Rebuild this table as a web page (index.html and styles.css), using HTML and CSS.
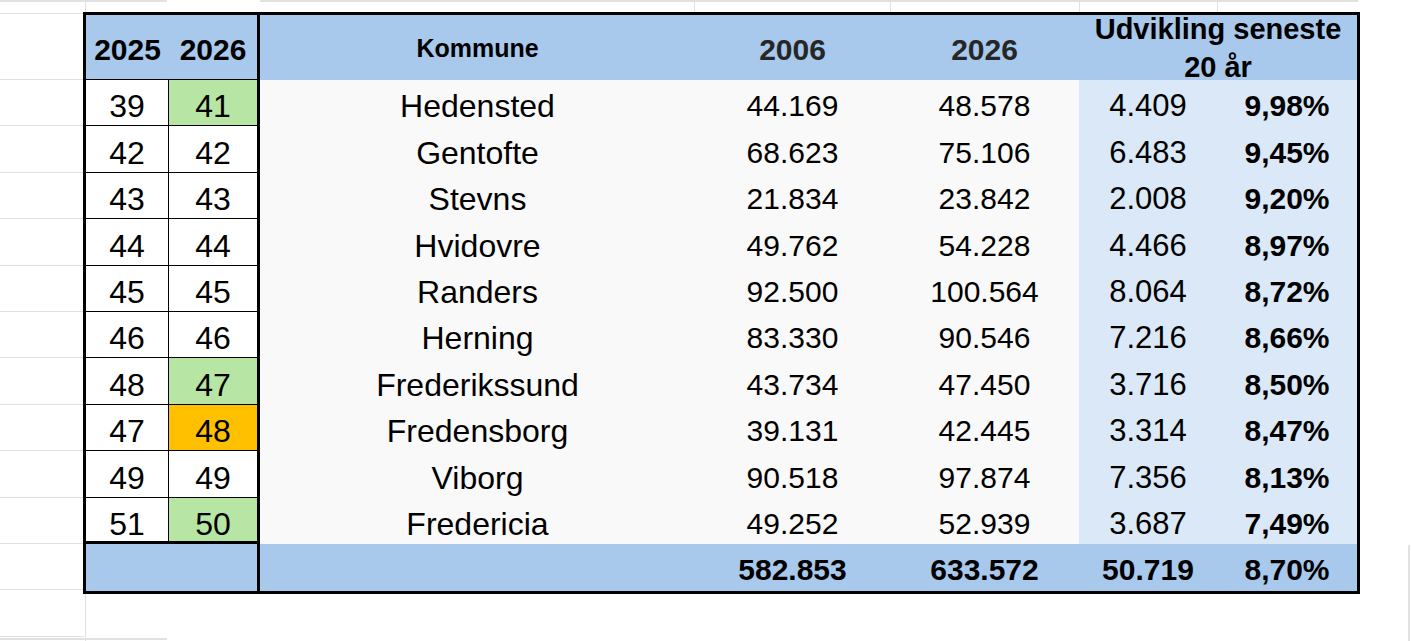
FILE: index.html
```html
<!DOCTYPE html>
<html lang="da">
<head>
<meta charset="utf-8">
<title>Kommuner</title>
<link rel="stylesheet" href="styles.css">
</head>
<body>
<div class="tbl">
  <div class="ranks">
    <div class="rh"><div class="c1">2025</div><div class="c2">2026</div></div>
    <div class="rr"><div class="c1">39</div><div class="c2 up">41</div></div>
    <div class="rr"><div class="c1">42</div><div class="c2">42</div></div>
    <div class="rr"><div class="c1">43</div><div class="c2">43</div></div>
    <div class="rr"><div class="c1">44</div><div class="c2">44</div></div>
    <div class="rr"><div class="c1">45</div><div class="c2">45</div></div>
    <div class="rr"><div class="c1">46</div><div class="c2">46</div></div>
    <div class="rr"><div class="c1">48</div><div class="c2 up">47</div></div>
    <div class="rr"><div class="c1">47</div><div class="c2 down">48</div></div>
    <div class="rr"><div class="c1">49</div><div class="c2">49</div></div>
    <div class="rr last"><div class="c1">51</div><div class="c2 up">50</div></div>
    <div class="rf"></div>
  </div>
  <div class="main">
    <div class="mh">
      <div class="hk">Kommune</div>
      <div class="hy">2006</div>
      <div class="hy">2026</div>
      <div class="udv">Udvikling seneste<br>20 år</div>
    </div>
    <div class="mr"><div class="name">Hedensted</div><div class="num">44.169</div><div class="num">48.578</div><div class="abs">4.409</div><div class="pct">9,98%</div></div>
    <div class="mr"><div class="name">Gentofte</div><div class="num">68.623</div><div class="num">75.106</div><div class="abs">6.483</div><div class="pct">9,45%</div></div>
    <div class="mr"><div class="name">Stevns</div><div class="num">21.834</div><div class="num">23.842</div><div class="abs">2.008</div><div class="pct">9,20%</div></div>
    <div class="mr"><div class="name">Hvidovre</div><div class="num">49.762</div><div class="num">54.228</div><div class="abs">4.466</div><div class="pct">8,97%</div></div>
    <div class="mr"><div class="name">Randers</div><div class="num">92.500</div><div class="num">100.564</div><div class="abs">8.064</div><div class="pct">8,72%</div></div>
    <div class="mr"><div class="name">Herning</div><div class="num">83.330</div><div class="num">90.546</div><div class="abs">7.216</div><div class="pct">8,66%</div></div>
    <div class="mr"><div class="name">Frederikssund</div><div class="num">43.734</div><div class="num">47.450</div><div class="abs">3.716</div><div class="pct">8,50%</div></div>
    <div class="mr"><div class="name">Fredensborg</div><div class="num">39.131</div><div class="num">42.445</div><div class="abs">3.314</div><div class="pct">8,47%</div></div>
    <div class="mr"><div class="name">Viborg</div><div class="num">90.518</div><div class="num">97.874</div><div class="abs">7.356</div><div class="pct">8,13%</div></div>
    <div class="mr"><div class="name">Fredericia</div><div class="num">49.252</div><div class="num">52.939</div><div class="abs">3.687</div><div class="pct">7,49%</div></div>
    <div class="mf"><div></div><div>582.853</div><div>633.572</div><div>50.719</div><div>8,70%</div></div>
  </div>
</div>
</body>
</html>
```
FILE: styles.css
```css
html, body {
  margin: 0;
  padding: 0;
}

body {
  width: 1411px;
  height: 641px;
  overflow: hidden;
  background-color: #ffffff;
  font-family: "Liberation Sans", Arial, sans-serif;
  color: #000;
  padding: 12px 0 0 83px;
  box-sizing: border-box;
  background-image:
    repeating-linear-gradient(180deg, #e1e1e1 0 1px, transparent 1px 46.4px),
    linear-gradient(#e1e1e1, #e1e1e1),
    linear-gradient(#e1e1e1, #e1e1e1),
    linear-gradient(#e1e1e1, #e1e1e1),
    linear-gradient(#e1e1e1, #e1e1e1),
    linear-gradient(#e1e1e1, #e1e1e1),
    linear-gradient(#e1e1e1, #e1e1e1),
    linear-gradient(#e1e1e1, #e1e1e1),
    linear-gradient(#e1e1e1, #e1e1e1),
    linear-gradient(#e1e1e1, #e1e1e1),
    linear-gradient(#e1e1e1, #e1e1e1),
    linear-gradient(#e1e1e1, #e1e1e1);
  background-repeat: no-repeat;
  background-position:
    0 79px,
    0 13px,
    0 0,
    260px 0,
    85px 0,
    694px 0,
    890px 0,
    1079px 0,
    1217px 0,
    85px 594px,
    0 638px,
    1408px 545px;
  background-size:
    84px 562px,
    84px 1px,
    167px 2px,
    1098px 2px,
    1px 13px,
    1px 13px,
    1px 13px,
    1px 13px,
    1px 13px,
    1px 47px,
    167px 2px,
    2px 96px;
}

.tbl {
  display: flex;
  width: 1277px;
  height: 582px;
  border: 3px solid #000;
  box-sizing: border-box;
}

/* ---------- left rank columns ---------- */
.ranks {
  width: 174px;
  border-right: 3px solid #000;
  box-sizing: border-box;
  display: flex;
  flex-direction: column;
  flex: none;
}

.rh,
.rr {
  display: flex;
  box-sizing: border-box;
}

.rh {
  height: 65px;
  background: #a8c8ec;
  border-bottom: 1px solid #000;
  font-weight: bold;
  font-size: 30px;
}

.rr {
  height: 46.4px;
  border-bottom: 1px solid #000;
  font-size: 32px;
  background: #fff;
}

.rr.last {
  border-bottom: 3px solid #000;
}

.c1,
.c2 {
  display: flex;
  align-items: flex-end;
  justify-content: center;
  line-height: 1;
  box-sizing: border-box;
}

.c1 {
  width: 83px;
}

.c2 {
  width: 88px;
}

.rr .c1 {
  border-right: 1px solid #000;
}

.rh .c1,
.rh .c2 {
  padding-bottom: 14px;
}

.rr .c1,
.rr .c2 {
  padding-bottom: 3px;
}

.rr.last .c1,
.rr.last .c2 {
  padding-bottom: 1px;
}

.c2.up {
  background: #b7e5a3;
}

.c2.down {
  background: #ffc000;
}

.rf {
  flex: 1;
  background: #a8c8ec;
}

/* ---------- main table ---------- */
.main {
  flex: 1;
  display: flex;
  flex-direction: column;
}

.mh,
.mr,
.mf {
  display: grid;
  grid-template-columns: 435px 195px 189px 138px 140px;
}

.mh {
  height: 65px;
  grid-template-rows: 65px;
  background: #a8c8ec;
  font-weight: bold;
}

.mh > div {
  display: flex;
  align-items: flex-end;
  justify-content: center;
  line-height: 1;
  min-height: 0;
}

.hk {
  font-size: 25px;
  padding-bottom: 19px;
}

.hy {
  font-size: 30px;
  color: #262626;
  padding-bottom: 15px;
}

.mh > .udv {
  grid-column: 4 / span 2;
  align-items: center;
  text-align: center;
  font-size: 29px;
  line-height: 38px;
  white-space: nowrap;
}

.mr {
  height: 46.4px;
}

.mr > div,
.mf > div {
  display: flex;
  align-items: flex-end;
  justify-content: center;
  line-height: 1;
}

.name {
  background: #f9f9f9;
  font-size: 32px;
  padding-bottom: 4px;
}

.num {
  background: #f9f9f9;
  font-size: 30px;
  padding-bottom: 5px;
}

.abs {
  background: #dae8f7;
  font-size: 31px;
  padding-bottom: 5px;
}

.pct {
  background: #dae8f7;
  font-size: 30px;
  font-weight: bold;
  padding-bottom: 5px;
}

.mf {
  flex: 1;
  background: #a8c8ec;
  font-weight: bold;
  font-size: 30px;
}

.mf > div {
  padding-bottom: 6px;
}
```
